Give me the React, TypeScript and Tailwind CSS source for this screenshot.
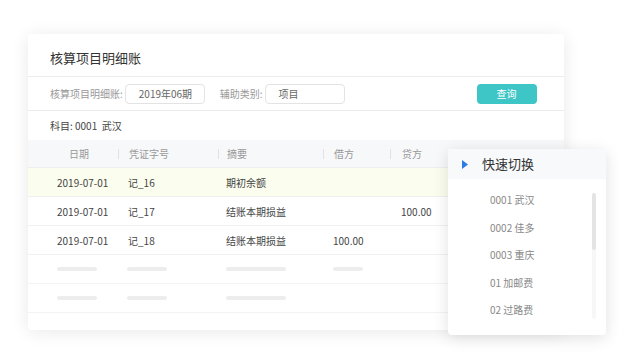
const rows = [
  { date: "2019-07-01", no: "记_16", desc: "期初余额", debit: "", credit: "", hl: true },
  { date: "2019-07-01", no: "记_17", desc: "结账本期损益", debit: "", credit: "100.00", hl: false },
  { date: "2019-07-01", no: "记_18", desc: "结账本期损益", debit: "100.00", credit: "", hl: false },
];

const items = ["0001 武汉", "0002 佳多", "0003 重庆", "01 加邮费", "02 过路费"];

const font = { fontFamily: '"Noto Sans CJK SC", "Noto Sans", sans-serif' };

export default function App() {
  return (
    <div className="relative w-[640px] h-[360px] bg-white overflow-hidden" style={font}>
      <div className="ml-[28px] mt-[34px] w-[536px] h-[296px] bg-white rounded-sm shadow-[0_2px_18px_rgba(0,0,0,0.09)] flex flex-col">
        <div className="h-[43px] border-b border-[#ececec] flex items-center pl-[22px] pt-[6px] text-[13px] text-[#333]">
          核算项目明细账
        </div>
        <div className="h-[34px] border-b border-[#ececec] flex items-center pl-[22px] text-[10px] text-[#999]">
          <span>核算项目明细账:</span>
          <div className="ml-[2px] w-[80px] h-[20px] border border-[#e3e3e3] rounded-sm flex items-center pl-[13px] text-[#666]">
            2019年06期
          </div>
          <span className="ml-[15px]">辅助类别:</span>
          <div className="ml-[2px] w-[80px] h-[20px] border border-[#e3e3e3] rounded-sm flex items-center pl-[13px] text-[#666]">
            项目
          </div>
          <div className="ml-[132px] w-[60px] h-[20px] bg-[#3ec5c6] rounded-sm flex items-center justify-center text-white">
            查询
          </div>
        </div>
        <div className="h-[29px] flex items-center pl-[22px] text-[10px] text-[#444]">科目: 0001&nbsp; 武汉</div>
        <div className="h-[28px] bg-[#f7f8fa] flex items-center text-[10px] text-[#999] border-b border-[#eeeeee]">
          <div className="w-[90px] pl-[41px]">日期</div>
          <div className="w-[100px] pl-[10px] border-l border-[#e2e2e2] leading-[10px]">凭证字号</div>
          <div className="w-[105px] pl-[8px] border-l border-[#e2e2e2] leading-[10px]">摘要</div>
          <div className="w-[67px] pl-[10px] border-l border-[#e2e2e2] leading-[10px]">借方</div>
          <div className="flex-1 pl-[11px] border-l border-[#e2e2e2] leading-[10px]">贷方</div>
        </div>
        {rows.map((r, i) => (
          <div
            key={i}
            className={`h-[29px] flex items-center text-[10px] text-[#444] border-b border-[#f0f0f0] ${r.hl ? "bg-[#fbfdee]" : ""}`}
          >
            <div className="w-[90px] pl-[29px]">{r.date}</div>
            <div className="w-[100px] pl-[10px]">{r.no}</div>
            <div className="w-[105px] pl-[8px]">{r.desc}</div>
            <div className="w-[67px] pl-[10px]">{r.debit}</div>
            <div className="flex-1 pl-[11px]">{r.credit}</div>
          </div>
        ))}
        {[true, false].map((four, i) => (
          <div key={i} className="h-[29px] flex items-center border-b border-[#f3f3f3]">
            <div className="w-[90px] pl-[29px]"><div className="w-[40px] h-[4px] rounded-full bg-[#ededed]" /></div>
            <div className="w-[100px] pl-[9px]"><div className="w-[40px] h-[4px] rounded-full bg-[#ededed]" /></div>
            <div className="w-[105px] pl-[8px]"><div className="w-[60px] h-[4px] rounded-full bg-[#ededed]" /></div>
            <div className="w-[67px] pl-[10px]">{four && <div className="w-[30px] h-[4px] rounded-full bg-[#ededed]" />}</div>
          </div>
        ))}
      </div>

      <div className="absolute left-[448px] top-[149px] w-[158px] h-[186px] bg-white rounded-sm shadow-[0_3px_16px_rgba(0,0,0,0.12)] flex flex-col">
        <div className="h-[30px] bg-[#f8f9fb] flex items-center pl-[14px] text-[13px] text-[#333]">
          <svg width="6" height="9" viewBox="0 0 6 9" className="mr-[14px]">
            <path d="M0 0 L6 4.5 L0 9 Z" fill="#2d7be5" />
          </svg>
          快速切换
        </div>
        <div className="relative flex-1 flex flex-col pt-[7px] pl-[42px] text-[10px] text-[#888]">
          {items.map((t) => (
            <div key={t} className="h-[27.5px] flex items-center">{t}</div>
          ))}
          <div className="absolute right-[10px] top-[14px] w-[4px] h-[126px] rounded-full bg-[#f7f7f7]">
            <div className="w-[4px] h-[57px] rounded-full bg-[#e4e4e4]" />
          </div>
        </div>
      </div>
    </div>
  );
}
